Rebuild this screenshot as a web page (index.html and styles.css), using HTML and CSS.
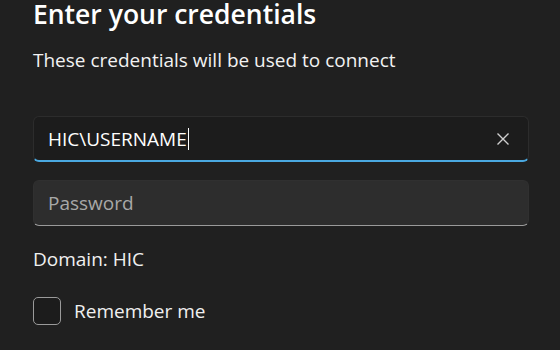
FILE: index.html
```html
<!DOCTYPE html>
<html lang="en">
<head>
  <meta charset="UTF-8" />
  <title>Enter your credentials</title>
  <link rel="stylesheet" href="styles.css">
</head>
<body>
  <div class="dialog">
    <h1>Enter your credentials</h1>
    <p class="subtitle">These credentials will be used to connect</p>

    <div class="field focused">
      <span class="value">HIC\USERNAME</span><span class="caret"></span>
      <span class="clear">
        <svg width="14" height="14" viewBox="0 0 14 14">
          <path d="M1.5 1.5 L12.5 12.5 M12.5 1.5 L1.5 12.5" stroke="#cfcfcf" stroke-width="1.4" fill="none" />
        </svg>
      </span>
    </div>

    <div class="field">
      <span class="placeholder">Password</span>
    </div>

    <p class="domain">Domain: HIC</p>

    <label class="remember">
      <span class="box"></span>
      <span>Remember me</span>
    </label>
  </div>
</body>
</html>
```

FILE: styles.css
```css
* {
  box-sizing: border-box;
  margin: 0;
  padding: 0;
}

body {
  background: #202020;
  color: #ffffff;
  font-family: 'Open Sans', 'Noto Sans', sans-serif;
  overflow: hidden;
}

.dialog {
  padding: 0 31px 0 33px;
  display: flex;
  flex-direction: column;
}

h1 {
  font-size: 26.5px;
  font-weight: 600;
  line-height: 28px;
}

.subtitle {
  font-size: 19px;
  line-height: 24px;
  margin-top: 20px;
  color: #f2f2f2;
}

.field {
  height: 46px;
  border-radius: 6px;
  background: #2d2d2d;
  border: 1px solid #303030;
  border-bottom: 1px solid #9a9a9a;
  display: flex;
  align-items: center;
  padding: 0 14px;
  font-size: 19px;
  margin-top: 18px;
}

.field.focused {
  margin-top: 44px;
  background: #1c1c1c;
  border-color: #2c2c2c;
  border-bottom: 2px solid #4aa8e0;
}

.value {
  color: #ffffff;
}

.caret {
  width: 1px;
  height: 22px;
  background: #ffffff;
  margin-left: 1px;
}

.clear {
  margin-left: auto;
  margin-right: 4px;
  display: flex;
}

.placeholder {
  color: #a8a8a8;
}

.domain {
  font-size: 19px;
  line-height: 24px;
  margin-top: 21px;
  color: #f0f0f0;
}

.remember {
  display: flex;
  align-items: center;
  gap: 13px;
  margin-top: 26px;
  font-size: 19px;
  color: #f0f0f0;
}

.box {
  width: 28px;
  height: 28px;
  border: 1px solid #9a9a9a;
  border-radius: 5px;
  background: #1c1c1c;
}
```
